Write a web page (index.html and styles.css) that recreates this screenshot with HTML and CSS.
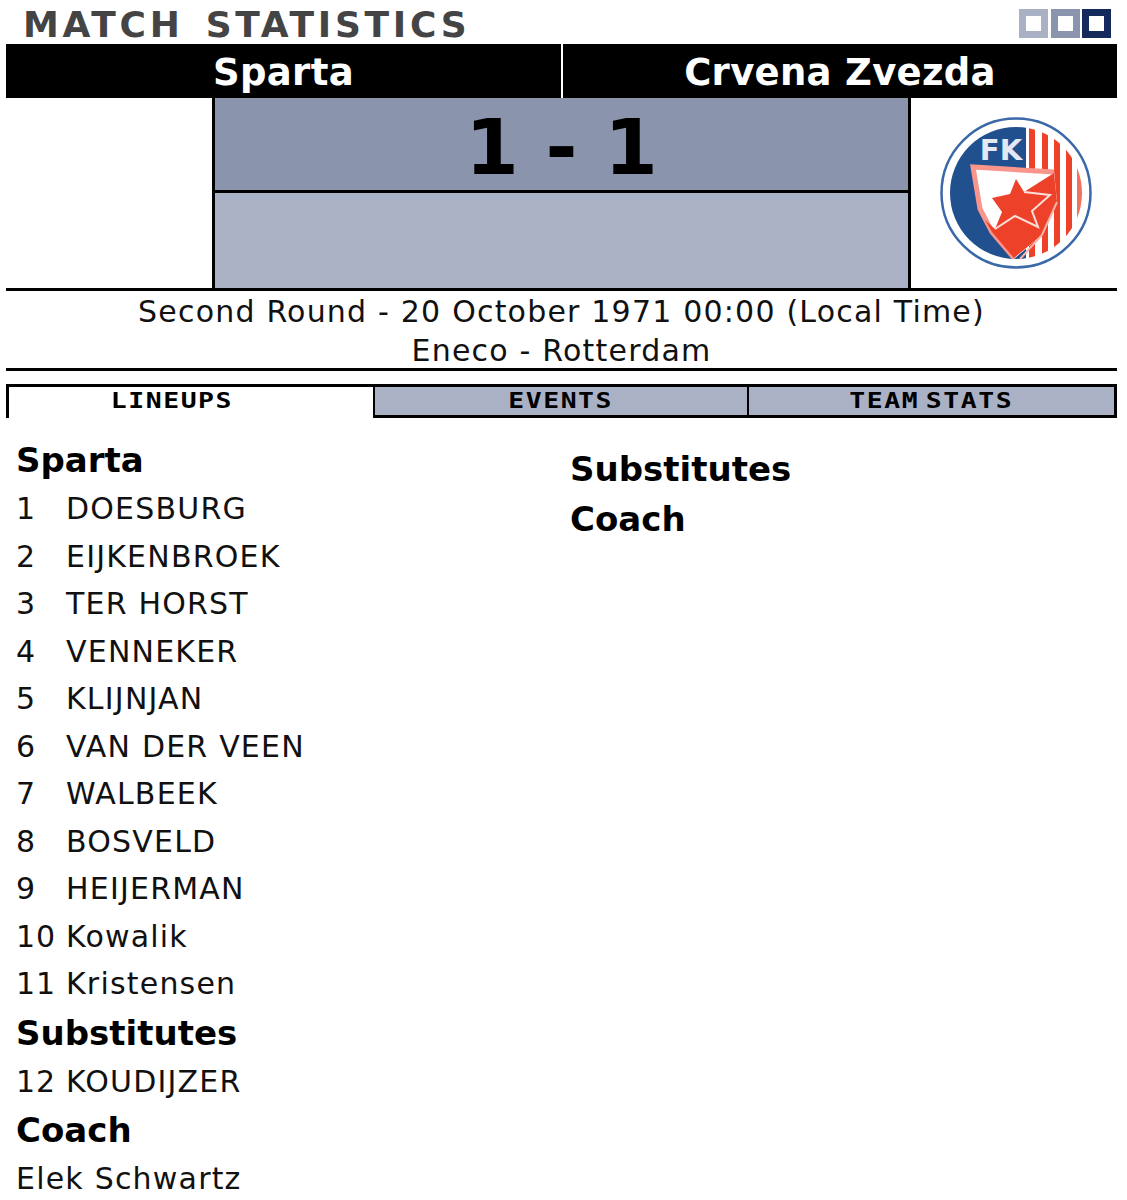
FILE: index.html
```html
<!DOCTYPE html>
<html lang="en">
<head>
<meta charset="utf-8">
<title>Match Statistics</title>
<link rel="stylesheet" href="styles.css">
</head>
<body>
<div class="page">
  <header class="titlebar">
    <h1 class="title">MATCH STATISTICS</h1>
    <div class="swatches">
      <span class="swatch swatch-light"></span>
      <span class="swatch swatch-mid"></span>
      <span class="swatch swatch-dark"></span>
    </div>
  </header>
  <div class="teams">
    <div class="team">Sparta</div>
    <div class="team">Crvena Zvezda</div>
  </div>
  <div class="scoreboard">
    <div class="crest-slot"></div>
    <div class="scores">
      <div class="score">1 - 1</div>
      <div class="scorers"></div>
    </div>
    <div class="crest-slot crest-right">
      <svg class="crest" viewBox="0 0 152 152" aria-label="FK Crvena Zvezda crest">
        <defs>
          <clipPath id="inner"><circle cx="76" cy="76" r="66"/></clipPath>
        </defs>
        <circle cx="76" cy="76" r="74.5" fill="#fff" stroke="#3a68a8" stroke-width="2.5"/>
        <g clip-path="url(#inner)">
          <rect x="0" y="0" width="86" height="152" fill="#21508f"/>
          <path d="M89 0h6v152h-6zM102 0h6v152h-6zM114 0h6v152h-6zM126 0h6v152h-6z" fill="#ee4129"/>
          <path d="M137 0h6v152h-6z" fill="#f2705c"/>
        </g>
        <text class="crest-text" x="61" y="43" text-anchor="middle">FK</text>
        <path d="M32 48 L114 54 L117 85 L102 118 L74 142 L52 115 L40 92Z" fill="#fff"/>
        <path d="M74 141 L52 115 L40 92 L33 50 L114 55" fill="none" stroke="#f9958a" stroke-width="5"/>
        <path d="M114 56 L84 75 L92 94 L98 110 L75 99 L55 112 L45 103 L52 115 L74 141 L102 118 L117 85Z" fill="#ee4129"/>
        <path d="M76 62 L84 75 L110 78 L92 94 L98 110 L75 99 L55 112 L62 95 L52 81 L70 77Z" fill="#ee4129"/>
        <path d="M84 75 L110 78 L92 94 L98 110 L75 99 L55 112" fill="none" stroke="#fde0da" stroke-width="2"/>
        <path d="M117 85 L102 118 L80 142" fill="none" stroke="#f9b3a8" stroke-width="2"/>
      </svg>
    </div>
  </div>
  <div class="info">
    <div>Second Round - 20 October 1971 00:00 (Local Time)</div>
    <div>Eneco - Rotterdam</div>
  </div>
  <nav class="tabs">
    <div class="tab tab-active"><span class="tab-label">LINEUPS</span></div>
    <div class="tab"><span class="tab-label">EVENTS</span></div>
    <div class="tab"><span class="tab-label">TEAM STATS</span></div>
  </nav>
  <main class="lineups">
    <section class="col col-left">
      <h2 class="heading">Sparta</h2>
      <div class="player"><span class="num">1</span>DOESBURG</div>
      <div class="player"><span class="num">2</span>EIJKENBROEK</div>
      <div class="player"><span class="num">3</span>TER HORST</div>
      <div class="player"><span class="num">4</span>VENNEKER</div>
      <div class="player"><span class="num">5</span>KLIJNJAN</div>
      <div class="player"><span class="num">6</span>VAN DER VEEN</div>
      <div class="player"><span class="num">7</span>WALBEEK</div>
      <div class="player"><span class="num">8</span>BOSVELD</div>
      <div class="player"><span class="num">9</span>HEIJERMAN</div>
      <div class="player"><span class="num">10</span>Kowalik</div>
      <div class="player"><span class="num">11</span>Kristensen</div>
      <h2 class="heading">Substitutes</h2>
      <div class="player"><span class="num">12</span>KOUDIJZER</div>
      <h2 class="heading">Coach</h2>
      <div class="player">Elek Schwartz</div>
    </section>
    <section class="col col-right">
      <h2 class="heading">Substitutes</h2>
      <h2 class="heading">Coach</h2>
    </section>
  </main>
</div>
</body>
</html>
```

FILE: styles.css
```css
html, body {
  margin: 0;
  padding: 0;
  background: #fff;
}
.page {
  width: 1111px;
  margin-left: 6px;
  height: 1200px;
  overflow: hidden;
  font-family: "DejaVu Sans", Verdana, sans-serif;
  font-variant-ligatures: none;
  color: #000;
}
.titlebar {
  display: flex;
  justify-content: space-between;
  align-items: flex-start;
  height: 44px;
}
.title {
  margin: 5px 0 0 17px;
  font-weight: 700;
  font-size: 36px;
  line-height: 40px;
  letter-spacing: 3.7px;
  word-spacing: 6px;
  color: #444;
  white-space: nowrap;
}
.swatches {
  display: flex;
  gap: 2.5px;
  margin: 9px 6px 0 0;
}
.swatch {
  width: 29px;
  height: 29px;
  box-sizing: border-box;
  border: 7px solid;
}
.swatch-light { border-color: #abb1c4; }
.swatch-mid { border-color: #8a94ac; }
.swatch-dark { border-color: #14295c; }
.teams {
  display: grid;
  grid-template-columns: 555px 554px;
  gap: 2px;
  height: 54px;
}
.team {
  background: #000;
  color: #fff;
  font-weight: 700;
  font-size: 37px;
  letter-spacing: 0.3px;
  line-height: 57px;
  height: 54px;
  overflow: hidden;
  text-align: center;
}
.scoreboard {
  display: grid;
  grid-template-columns: 206px 699px 206px;
  height: 193px;
  border-bottom: 3px solid #000;
  box-sizing: border-box;
}
.crest-slot { display: flex; }
.crest-right {
  justify-content: flex-end;
  padding-right: 25px;
  padding-top: 19px;
  box-sizing: border-box;
}
.crest { width: 152px; height: 152px; }
.crest-text {
  font-family: "DejaVu Sans", sans-serif;
  font-weight: 700;
  font-size: 29px;
  fill: #e3e8f2;
}
.scores {
  border-left: 3px solid #000;
  border-right: 3px solid #000;
  display: flex;
  flex-direction: column;
}
.score {
  height: 92px;
  background: #8a94ac;
  border-bottom: 3px solid #000;
  font-weight: 700;
  font-size: 77px;
  line-height: 99px;
  overflow: hidden;
  text-align: center;
}
.scorers {
  flex: 1;
  background: #abb1c4;
}
.info {
  height: 75px;
  border-bottom: 3px solid #000;
  font-size: 30px;
  letter-spacing: 1.2px;
  line-height: 38.5px;
  padding-top: 2px;
  margin-bottom: -2px;
  text-align: center;
  color: #111;
}
.tabs {
  display: grid;
  grid-template-columns: 368px 374px 369px;
  height: 34px;
  margin-top: 15px;
}
.tab {
  background: #abb1c4;
  border: 3px solid #000;
  border-left-width: 1.5px;
  border-right-width: 1.5px;
  box-sizing: border-box;
  font-family: "DejaVu Sans Mono", monospace;
  font-weight: 700;
  font-size: 22px;
  line-height: 27px;
  text-align: center;
}
.tab-label {
  display: inline-block;
  letter-spacing: 1.3px;
  word-spacing: -9px;
  transform: scaleX(1.2);
}
.tab-active {
  background: #fff;
  border-bottom: 0;
  border-left-width: 3px;
  padding-right: 38px;
}
.tab:last-child { border-right-width: 3px; }
.lineups {
  display: grid;
  grid-template-columns: 564px 1fr;
}
.col-left { padding: 17px 0 0 10px; }
.col-right { padding-top: 25.5px; }
.heading {
  margin: 0;
  font-size: 34px;
  font-weight: 700;
  height: 50px;
  line-height: 50px;
}
.player {
  height: 47.5px;
  line-height: 47.5px;
  font-size: 30px;
  letter-spacing: 1.2px;
  color: #111;
  white-space: nowrap;
}
.num {
  display: inline-block;
  width: 50px;
  letter-spacing: 1px;
}
```
